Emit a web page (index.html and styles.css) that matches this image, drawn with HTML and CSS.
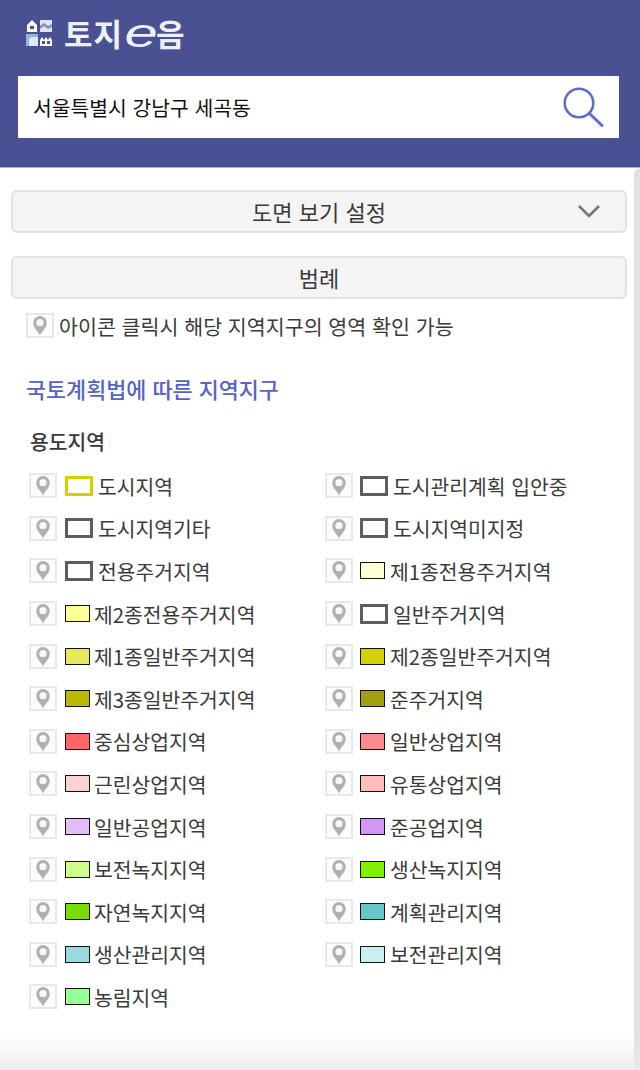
FILE: index.html
```html
<!DOCTYPE html>
<html lang="ko">
  <head>
    <meta charset="UTF-8" />
    <meta name="viewport" content="width=device-width, initial-scale=1.0" />
    <title>토지이음</title>
    <link rel="stylesheet" href="styles.css">
  </head>

  <body>
    <svg class="defs" width="0" height="0">
      <symbol id="pin" viewBox="0 0 28 25">
        <path d="M14 22.500c-1-3.500-6.800-7.500-6.800-12.800a6.800 6.800 0 0 1 13.600 0c0 5.300-5.800 9.300-6.800 12.800z" fill="#b0b0b0" />
        <circle cx="14" cy="9.700" r="3.600" fill="#f8f8f8" />
      </symbol>
    </svg>

    <header class="top">
      <div class="logo">
        <svg class="logo-mark" width="28" height="28" viewBox="0 0 28 28">
          <path d="M7 1l5 5v7H2V6z" fill="#fff" />
          <rect x="5" y="7" width="4" height="3" fill="#4a5192" />
          <rect x="15" y="1" width="12" height="12" fill="#dfe3f2" />
          <path d="M15 7l4-3 4 3 4-2v3l-4 2-4-3-4 3z" fill="#7d8fc4" />
          <rect x="1" y="15" width="12" height="12" fill="#8fb4e0" />
          <path d="M4 27v-6q0-3 3-3h6v9z" fill="#dfe9f6" />
          <path d="M15 27v-6l2-3 2 3 2-3 2 3 2-3 2 3v6z" fill="#fff" />
          <rect x="17" y="22" width="3" height="3" fill="#4a5192" />
          <rect x="22" y="22" width="3" height="3" fill="#4a5192" />
        </svg>
        <span class="logo-text">토지<i>e</i>음</span>
      </div>
      <div class="search">
        <span class="search-text">서울특별시 강남구 세곡동</span>
        <svg class="search-icon" width="42" height="42" viewBox="0 0 42 42">
          <circle cx="17" cy="16" r="14.300" fill="none" stroke="#5c6ccb" stroke-width="2.600" />
          <path d="M28 27l12 11.500" fill="none" stroke="#5c6ccb" stroke-width="3" stroke-linecap="round" />
        </svg>
      </div>
    </header>

    <main class="panel">
      <button type="button" class="bar bar-first">
        도면 보기 설정
        <svg class="chevron" width="24" height="14" viewBox="0 0 24 14">
          <path d="M2 2l10 10 10-10" fill="none" stroke="#777" stroke-width="2.600" />
        </svg>
      </button>
      <button type="button" class="bar">범례</button>

      <p class="hint">
        <span class="pin-box"><svg width="28" height="25"><use href="#pin" /></svg></span>
        아이콘 클릭시 해당 지역지구의 영역 확인 가능
      </p>

      <h2 class="law">국토계획법에 따른 지역지구</h2>
      <h3 class="group">용도지역</h3>

      <ul class="legend">
        <li><span class="pin-box"><svg width="28" height="25"><use href="#pin" /></svg></span><span class="sw sw-city"></span>도시지역</li>
        <li><span class="pin-box"><svg width="28" height="25"><use href="#pin" /></svg></span><span class="sw sw-none"></span>도시관리계획 입안중</li>
        <li><span class="pin-box"><svg width="28" height="25"><use href="#pin" /></svg></span><span class="sw sw-none"></span>도시지역기타</li>
        <li><span class="pin-box"><svg width="28" height="25"><use href="#pin" /></svg></span><span class="sw sw-none"></span>도시지역미지정</li>
        <li><span class="pin-box"><svg width="28" height="25"><use href="#pin" /></svg></span><span class="sw sw-none"></span>전용주거지역</li>
        <li><span class="pin-box"><svg width="28" height="25"><use href="#pin" /></svg></span><span class="sw c-ffffd5"></span>제1종전용주거지역</li>
        <li><span class="pin-box"><svg width="28" height="25"><use href="#pin" /></svg></span><span class="sw c-ffff99"></span>제2종전용주거지역</li>
        <li><span class="pin-box"><svg width="28" height="25"><use href="#pin" /></svg></span><span class="sw sw-none"></span>일반주거지역</li>
        <li><span class="pin-box"><svg width="28" height="25"><use href="#pin" /></svg></span><span class="sw c-e8e85c"></span>제1종일반주거지역</li>
        <li><span class="pin-box"><svg width="28" height="25"><use href="#pin" /></svg></span><span class="sw c-d2d200"></span>제2종일반주거지역</li>
        <li><span class="pin-box"><svg width="28" height="25"><use href="#pin" /></svg></span><span class="sw c-b9b900"></span>제3종일반주거지역</li>
        <li><span class="pin-box"><svg width="28" height="25"><use href="#pin" /></svg></span><span class="sw c-a0a010"></span>준주거지역</li>
        <li><span class="pin-box"><svg width="28" height="25"><use href="#pin" /></svg></span><span class="sw c-ff6666"></span>중심상업지역</li>
        <li><span class="pin-box"><svg width="28" height="25"><use href="#pin" /></svg></span><span class="sw c-ff8c8c"></span>일반상업지역</li>
        <li><span class="pin-box"><svg width="28" height="25"><use href="#pin" /></svg></span><span class="sw c-ffd2d2"></span>근린상업지역</li>
        <li><span class="pin-box"><svg width="28" height="25"><use href="#pin" /></svg></span><span class="sw c-ffbebe"></span>유통상업지역</li>
        <li><span class="pin-box"><svg width="28" height="25"><use href="#pin" /></svg></span><span class="sw c-e1bef8"></span>일반공업지역</li>
        <li><span class="pin-box"><svg width="28" height="25"><use href="#pin" /></svg></span><span class="sw c-d296f5"></span>준공업지역</li>
        <li><span class="pin-box"><svg width="28" height="25"><use href="#pin" /></svg></span><span class="sw c-ccff8c"></span>보전녹지지역</li>
        <li><span class="pin-box"><svg width="28" height="25"><use href="#pin" /></svg></span><span class="sw c-82f000"></span>생산녹지지역</li>
        <li><span class="pin-box"><svg width="28" height="25"><use href="#pin" /></svg></span><span class="sw c-78dc00"></span>자연녹지지역</li>
        <li><span class="pin-box"><svg width="28" height="25"><use href="#pin" /></svg></span><span class="sw c-64c8c8"></span>계획관리지역</li>
        <li><span class="pin-box"><svg width="28" height="25"><use href="#pin" /></svg></span><span class="sw c-96dcdc"></span>생산관리지역</li>
        <li><span class="pin-box"><svg width="28" height="25"><use href="#pin" /></svg></span><span class="sw c-c8f0f0"></span>보전관리지역</li>
        <li><span class="pin-box"><svg width="28" height="25"><use href="#pin" /></svg></span><span class="sw c-96ff96"></span>농림지역</li>
      </ul>
    </main>

    <div class="scroll-track"></div>
    <div class="bottom-fade"></div>
  </body>
</html>
```

FILE: styles.css
```css
* {
  margin: 0;
  padding: 0;
  box-sizing: border-box;
  font-family: "Noto Sans CJK KR", "Noto Sans", sans-serif;
}

html,
body {
  height: 1070px;
  overflow: hidden;
}

body {
  position: relative;
  background: #fff;
  color: #3a3a3a;
}

.defs {
  display: block;
  height: 0;
}

.top {
  height: 168px;
  padding: 17px 21px 0 18px;
  background: #4a5192;
  border-bottom: 1px solid #a9aed0;
}

.logo {
  display: flex;
  align-items: center;
  gap: 11px;
  height: 32px;
  padding-left: 7px;
}

.logo-text {
  display: flex;
  align-items: center;
  height: 32px;
  color: #eef0f8;
  font-size: 31px;
  font-weight: 700;
  letter-spacing: 1px;
  line-height: 32px;
  white-space: nowrap;
}

.logo-text i {
  display: block;
  width: 22px;
  margin: 0 4px 0 7px;
  font-family: "Liberation Sans", sans-serif;
  font-size: 40px;
  font-weight: 400;
  letter-spacing: 0;
  transform: scaleX(1.5);
}

.search {
  display: flex;
  align-items: center;
  justify-content: space-between;
  height: 62px;
  margin-top: 27px;
  padding: 0 15px;
  background: #fff;
}

.search-text {
  color: #111;
  font-size: 20.400px;
}

.search-icon {
  margin-top: 2px;
}

.panel {
  padding: 22px 13px 0 11px;
}

.bar {
  display: block;
  position: relative;
  width: 100%;
  height: 43px;
  padding-bottom: 2px;
  background: #f4f4f4;
  border: 2px solid #e2e2e2;
  border-radius: 6px;
  color: #3a3a3a;
  font-size: 22px;
  line-height: 36px;
  text-align: center;
}

.bar-first {
  margin-bottom: 23px;
}

.chevron {
  position: absolute;
  top: 12px;
  right: 24px;
}

.hint {
  display: flex;
  align-items: center;
  gap: 5px;
  margin-top: 14px;
  padding-left: 15px;
  height: 25px;
  font-size: 20.600px;
  white-space: nowrap;
}

.pin-box {
  display: block;
  flex: none;
  width: 28px;
  height: 25px;
  border: 2px solid #e8e8e8;
  background: #fcfcfc;
}

.pin-box svg {
  display: block;
  margin: -2px;
}

.law {
  margin-top: 36px;
  padding-left: 15px;
  color: #5563c9;
  font-size: 21.800px;
  font-weight: 500;
  line-height: 30px;
}

.group {
  margin-top: 23px;
  padding-left: 19px;
  font-size: 20.400px;
  font-weight: 500;
  line-height: 28px;
}

.legend {
  display: grid;
  grid-template-columns: 296px 1fr;
  grid-auto-rows: 42.600px;
  margin-top: 9.500px;
  padding-left: 18px;
  list-style: none;
}

.legend li {
  display: flex;
  align-items: center;
  font-size: 20.400px;
  white-space: nowrap;
}

.legend .pin-box {
  margin-right: 8px;
}

.legend li:nth-child(even) .pin-box {
  margin-right: 7px;
}

.sw {
  display: block;
  flex: none;
  width: 25px;
  height: 17px;
  margin-right: 4px;
  border: 1.500px solid #111;
}

.legend li:nth-child(even) .sw {
  margin-right: 5px;
}

.sw-none,
.sw-city {
  width: 28px;
  height: 20px;
  margin-right: 5px;
  border: 3px solid #5e5e5e;
}

.sw-city {
  border-color: #d2d200;
}

.c-ffffd5 { background: #ffffd5; }
.c-ffff99 { background: #ffff99; }
.c-e8e85c { background: #e8e85c; }
.c-d2d200 { background: #d2d200; }
.c-b9b900 { background: #b9b900; }
.c-a0a010 { background: #a0a010; }
.c-ff6666 { background: #ff6666; }
.c-ff8c8c { background: #ff8c8c; }
.c-ffd2d2 { background: #ffd2d2; }
.c-ffbebe { background: #ffbebe; }
.c-e1bef8 { background: #e1bef8; }
.c-d296f5 { background: #d296f5; }
.c-ccff8c { background: #ccff8c; }
.c-82f000 { background: #82f000; }
.c-78dc00 { background: #78dc00; }
.c-64c8c8 { background: #64c8c8; }
.c-96dcdc { background: #96dcdc; }
.c-c8f0f0 { background: #c8f0f0; }
.c-96ff96 { background: #96ff96; }

.scroll-track {
  position: absolute;
  top: 169px;
  right: 0;
  bottom: 0;
  width: 6px;
  background: #e2e2e2;
  border-radius: 4px 0 0 0;
}

.bottom-fade {
  position: absolute;
  left: 0;
  right: 0;
  bottom: 0;
  height: 36px;
  background: linear-gradient(to bottom, rgba(235, 235, 235, 0), rgba(235, 235, 235, 0.9));
}
```
